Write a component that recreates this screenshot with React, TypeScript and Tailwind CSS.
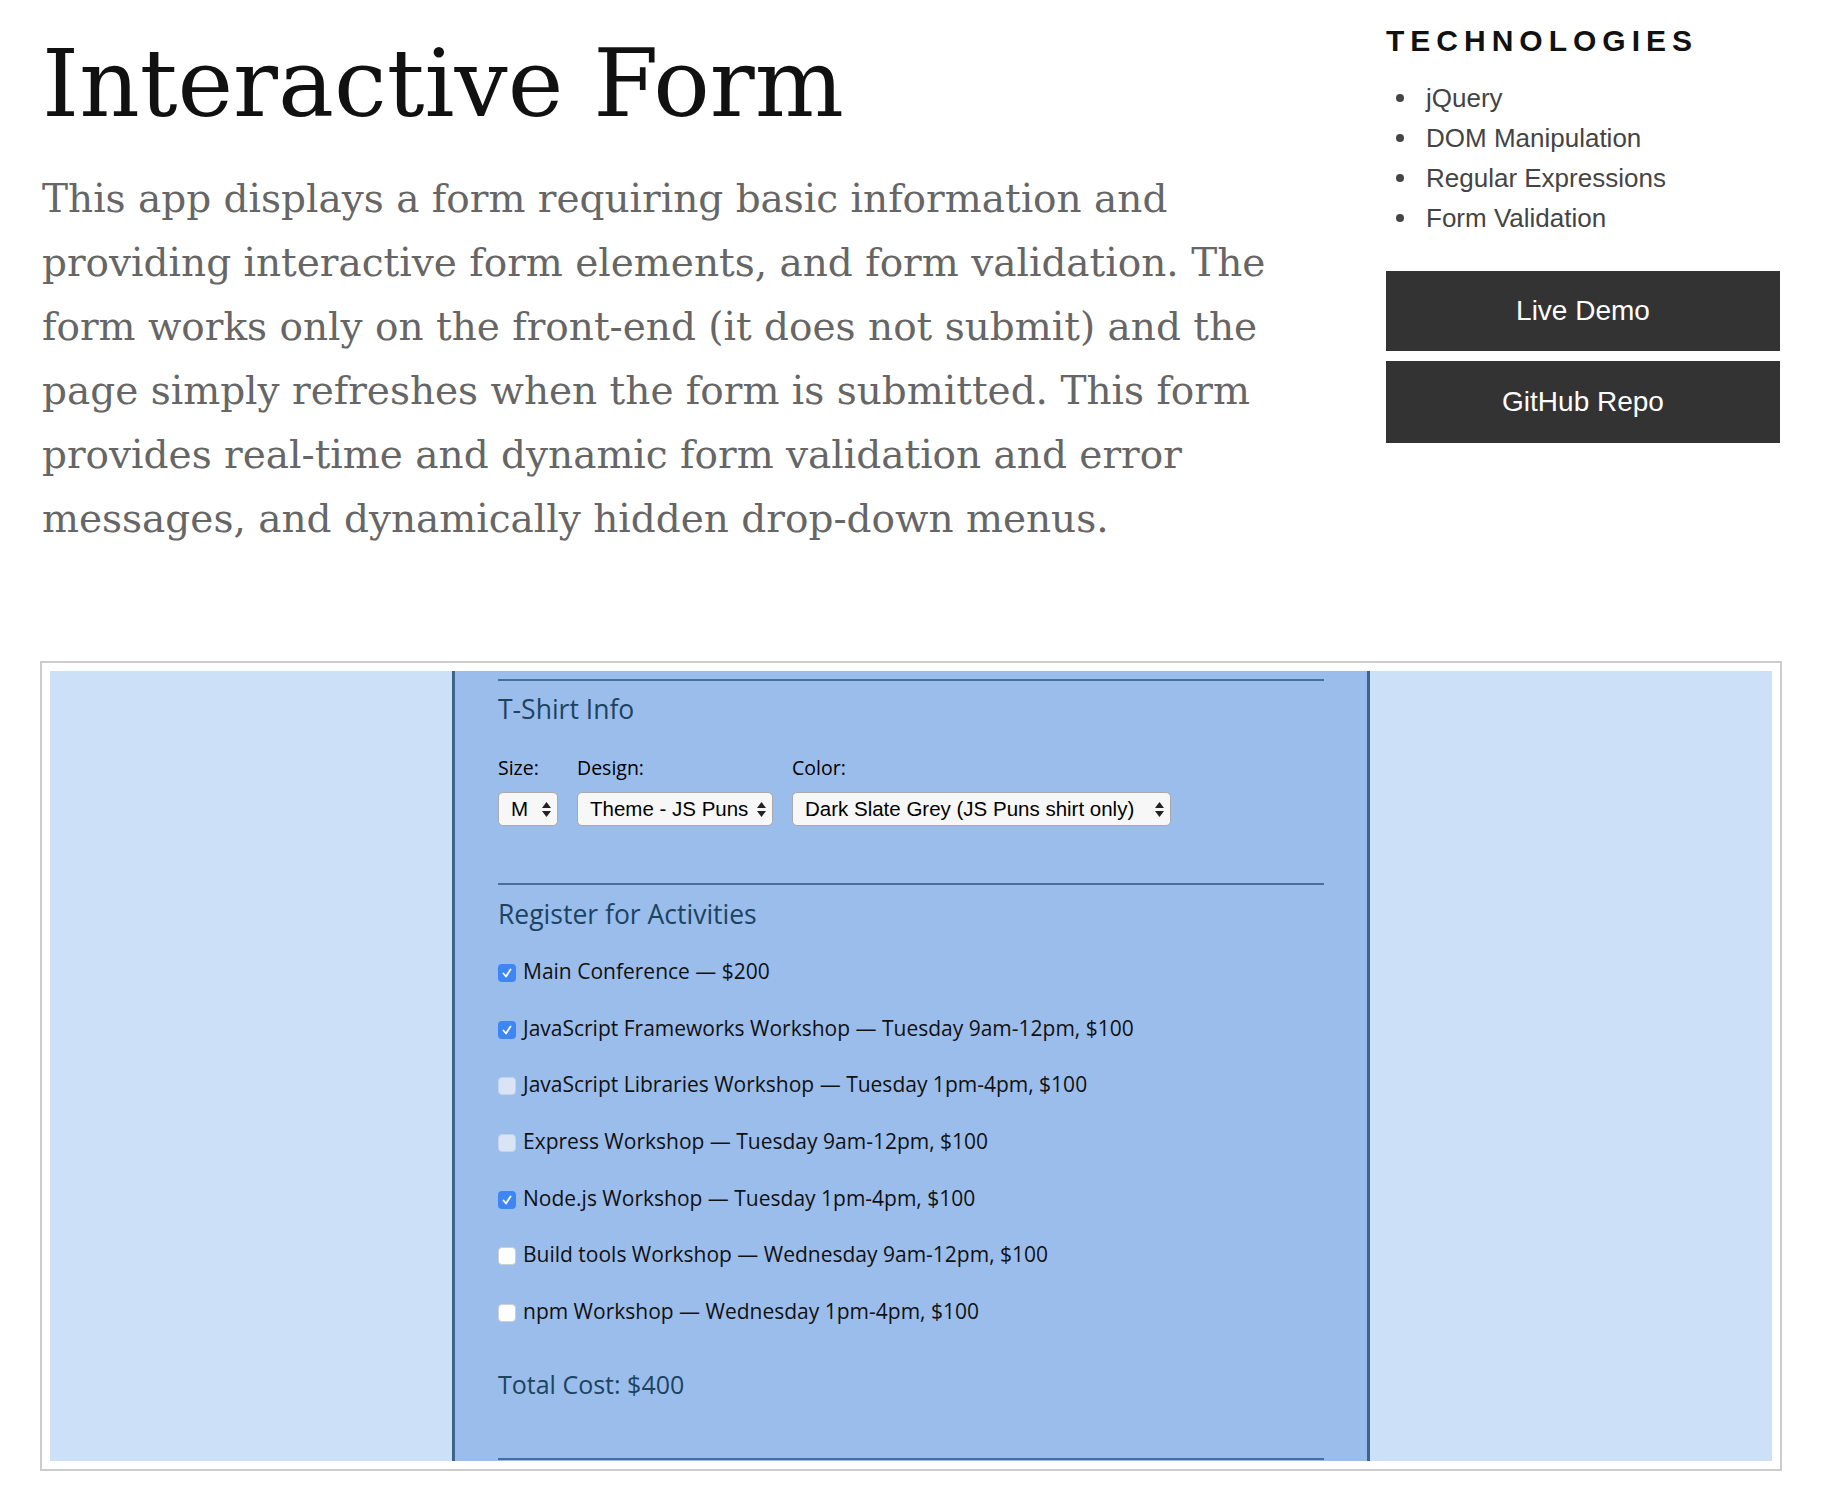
import React from "react";

const serif = "font-['DejaVu_Serif',serif]";
const sans = "font-['Liberation_Sans',Arial,sans-serif]";
const round = "font-['Open_Sans',sans-serif]";

const intro = [
  "This app displays a form requiring basic information and",
  "providing interactive form elements, and form validation. The",
  "form works only on the front-end (it does not submit) and the",
  "page simply refreshes when the form is submitted. This form",
  "provides real-time and dynamic form validation and error",
  "messages, and dynamically hidden drop-down menus.",
];

const technologies = ["jQuery", "DOM Manipulation", "Regular Expressions", "Form Validation"];

type BoxState = "checked" | "disabled" | "off";

const activities: { label: string; state: BoxState }[] = [
  { label: "Main Conference — $200", state: "checked" },
  { label: "JavaScript Frameworks Workshop — Tuesday 9am-12pm, $100", state: "checked" },
  { label: "JavaScript Libraries Workshop — Tuesday 1pm-4pm, $100", state: "disabled" },
  { label: "Express Workshop — Tuesday 9am-12pm, $100", state: "disabled" },
  { label: "Node.js Workshop — Tuesday 1pm-4pm, $100", state: "checked" },
  { label: "Build tools Workshop — Wednesday 9am-12pm, $100", state: "off" },
  { label: "npm Workshop — Wednesday 1pm-4pm, $100", state: "off" },
];

function SelectArrows() {
  return (
    <svg width="9" height="15" viewBox="0 0 9 15" className="shrink-0">
      <path d="M0 6 L4.5 0 L9 6 Z" fill="#222" />
      <path d="M0 9 L4.5 15 L9 9 Z" fill="#222" />
    </svg>
  );
}

function FakeSelect({ value, width }: { value: string; width: string }) {
  return (
    <div
      className={`${width} h-[34px] flex items-center justify-between gap-[6px] pl-[12px] pr-[6px] bg-[#f7f7f7] border border-[#a9a9a9] rounded-[5px] ${sans} text-[20.5px] text-black`}
    >
      <span className="whitespace-nowrap">{value}</span>
      <SelectArrows />
    </div>
  );
}

function Checkbox({ state }: { state: BoxState }) {
  if (state === "checked") {
    return (
      <div className="w-[18px] h-[18px] mt-[5px] shrink-0 rounded-[4px] bg-[#3e86f4] flex items-center justify-center">
        <svg width="12" height="12" viewBox="0 0 12 12">
          <path d="M2.5 6.5 L5 9.5 L9.5 2.5" fill="none" stroke="white" strokeWidth="1.8" strokeLinecap="round" strokeLinejoin="round" />
        </svg>
      </div>
    );
  }
  if (state === "disabled") {
    return <div className="w-[18px] h-[18px] mt-[5px] shrink-0 rounded-[4px] bg-[#d9e5f7] border border-[#c3d3ea]" />;
  }
  return <div className="w-[18px] h-[18px] mt-[5px] shrink-0 rounded-[4px] bg-white border border-[#cfcfcf]" />;
}

function Rule() {
  return <div className="h-[2px] bg-[#44709a]" />;
}

export default function App() {
  return (
    <div className="min-h-[1494px] bg-white pt-[23px]">
      <div className="flex justify-between pl-[42px] pr-[52px]">
        <div>
          <h1 className={`${serif} mt-[5px] text-[94px] leading-[112px] text-[#111] whitespace-nowrap`}>
            Interactive Form
          </h1>
          <p className={`${serif} mt-[27px] text-[39px] leading-[64px] text-[#666]`}>
            {intro.map((line) => (
              <span key={line} className="block whitespace-nowrap">
                {line}
              </span>
            ))}
          </p>
        </div>

        <div className="w-[394px]">
          <h2 className={`${sans} font-bold text-[30px] leading-[36px] tracking-[0.2em] text-[#111]`}>
            TECHNOLOGIES
          </h2>
          <ul className={`${sans} mt-[19px] text-[26px] leading-[40px] text-[#444]`}>
            {technologies.map((t) => (
              <li key={t} className="flex items-center">
                <span className="w-[8px] h-[8px] ml-[10px] mr-[22px] rounded-full bg-[#444]" />
                {t}
              </li>
            ))}
          </ul>
          <div className="mt-[33px] flex flex-col gap-[10px]">
            <a className={`${sans} h-[80px] flex items-center justify-center bg-[#333] text-white text-[28px]`}>
              Live Demo
            </a>
            <a className={`${sans} h-[82px] flex items-center justify-center bg-[#333] text-white text-[28px]`}>
              GitHub Repo
            </a>
          </div>
        </div>
      </div>

      <div className="mt-[110px] ml-[40px] mr-[50px] border-2 border-[#cccccc] bg-white p-2">
        <div className="h-[790px] overflow-hidden bg-[#cce0f8] flex justify-center">
          <div className="w-[918px] h-full border-x-[3px] border-[#3a6689] bg-[#9bbdec] px-[43px] pt-[8px]">
            <Rule />
            <h3 className={`${round} mt-[12px] text-[26.5px] leading-[32px] text-[#1b4460]`}>T-Shirt Info</h3>

            <div className="mt-[31px] flex gap-[19px]">
              <div className="flex flex-col gap-[12px]">
                <label className={`${round} text-[19.5px] leading-[24px] text-black`}>Size:</label>
                <FakeSelect value="M" width="w-[60px]" />
              </div>
              <div className="flex flex-col gap-[12px]">
                <label className={`${round} text-[19.5px] leading-[24px] text-black`}>Design:</label>
                <FakeSelect value="Theme - JS Puns" width="w-[196px]" />
              </div>
              <div className="flex flex-col gap-[12px]">
                <label className={`${round} text-[19.5px] leading-[24px] text-black`}>Color:</label>
                <FakeSelect value="Dark Slate Grey (JS Puns shirt only)" width="w-[379px]" />
              </div>
            </div>

            <div className="mt-[57px]">
              <Rule />
            </div>
            <h3 className={`${round} mt-[13px] text-[26.5px] leading-[32px] text-[#1b4460]`}>
              Register for Activities
            </h3>

            <div className="mt-[29px] flex flex-col gap-[32.7px]">
              {activities.map((a) => (
                <label key={a.label} className="flex items-start gap-[7px]">
                  <Checkbox state={a.state} />
                  <span className={`${round} text-[21px] leading-[24px] text-[#111] whitespace-nowrap`}>
                    {a.label}
                  </span>
                </label>
              ))}
            </div>

            <div className={`${round} mt-[45px] text-[25px] leading-[32px] text-[#1b4460]`}>Total Cost: $400</div>

            <div className="mt-[58px]">
              <Rule />
            </div>
          </div>
        </div>
      </div>
    </div>
  );
}
